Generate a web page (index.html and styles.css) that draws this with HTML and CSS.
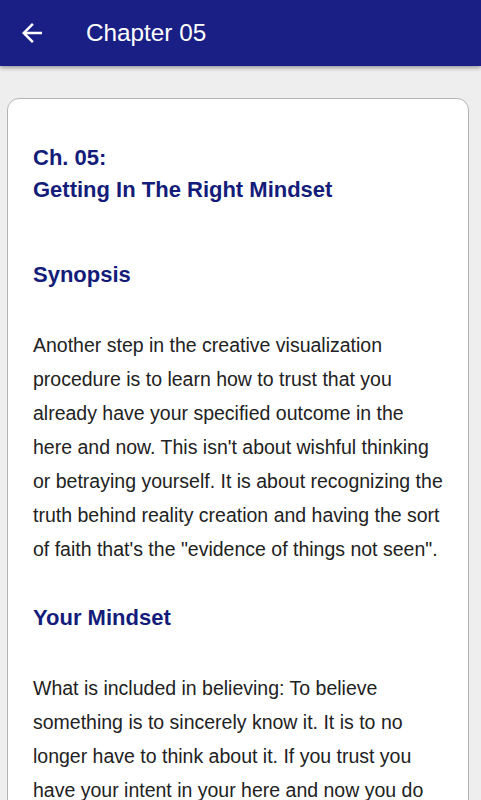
FILE: index.html
```
<!DOCTYPE html>
<html>
<head>
<meta charset="utf-8">
<link rel="stylesheet" href="styles.css">
</head>
<body>
<header class="appbar">
  <button class="back" aria-label="Back">
    <svg viewBox="0 0 24 24" width="30" height="30"><path fill="#fff" d="M20 11H7.83l5.59-5.59L12 4l-8 8 8 8 1.41-1.41L7.83 13H20v-2z"/></svg>
  </button>
  <div class="title">Chapter 05</div>
</header>
<main class="content">
  <article class="card">
    <h1 class="chapter">Ch. 05:<br>Getting In The Right Mindset</h1>
    <h2 class="section">Synopsis</h2>
    <p class="text">Another step in the creative visualization procedure is to learn how to trust that you already have your specified outcome in the here and now. This isn't about wishful thinking or betraying yourself. It is about recognizing the truth behind reality creation and having the sort of faith that's the "evidence of things not seen".</p>
    <h2 class="section">Your Mindset</h2>
    <p class="text">What is included in believing: To believe something is to sincerely know it. It is to no longer have to think about it. If you trust you have your intent in your here and now you do not have to worry about it anymore. You simply know it is so.</p>
  </article>
</main>
</body>
</html>
```
FILE: styles.css
```
html, body {
  margin: 0;
  padding: 0;
  background: #eeeeee;
  font-family: "Liberation Sans", Arial, sans-serif;
}
.appbar {
  height: 66px;
  background: #1a1f85;
  display: flex;
  align-items: center;
  box-shadow: 0 2px 4px rgba(0,0,0,0.35);
  position: relative;
  z-index: 1;
}
.back {
  background: none;
  border: 0;
  padding: 0;
  margin-left: 17px;
  width: 30px;
  height: 30px;
  display: flex;
}
.title {
  color: #fff;
  font-size: 24.3px;
  margin-left: 39px;
}
.content {
  padding: 32px 12px 0 7px;
}
.card {
  background: #fff;
  border: 1px solid #b4b4b4;
  border-radius: 12px;
  padding: 43px 20px 40px 25px;
}
.chapter {
  margin: 0 0 53px;
  font-size: 22px;
  line-height: 32px;
  color: #141c7a;
  font-weight: bold;
}
.section {
  margin: 36px 0 37px;
  font-size: 22px;
  line-height: 32px;
  color: #141c7a;
  font-weight: bold;
}
.text {
  margin: 0;
  font-size: 19.5px;
  line-height: 34px;
  color: #222;
}
```
